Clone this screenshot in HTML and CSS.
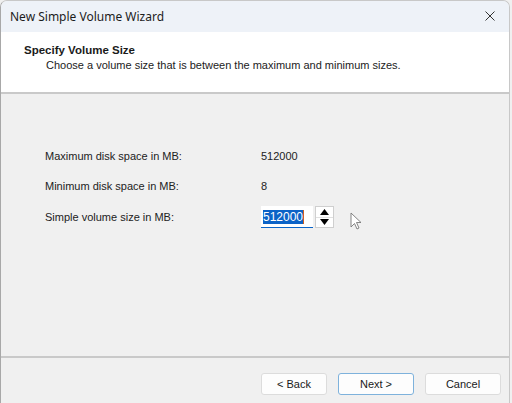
FILE: index.html
```html
<!DOCTYPE html>
<html>
<head>
<meta charset="utf-8">
<link rel="stylesheet" href="styles.css">
</head>
<body>
<div class="window">
  <div class="titlebar">
    <span class="title">New Simple Volume Wizard</span>
    <span class="close">
      <svg width="10" height="10" viewBox="0 0 10 10"><path d="M0.5 0.5L9.5 9.5M9.5 0.5L0.5 9.5" stroke="#333" stroke-width="1"/></svg>
    </span>
  </div>
  <div class="header">
    <div class="h-title">Specify Volume Size</div>
    <div class="h-sub">Choose a volume size that is between the maximum and minimum sizes.</div>
  </div>
  <div class="content">
    <div class="row"><span class="label">Maximum disk space in MB:</span><span class="value">512000</span></div>
    <div class="row"><span class="label">Minimum disk space in MB:</span><span class="value">8</span></div>
    <div class="row row-input">
      <span class="label">Simple volume size in MB:</span>
      <span class="spin">
        <span class="input"><span class="sel">512000</span><span class="caret"></span></span>
        <span class="arrows">
          <span class="arr"><svg width="9" height="6" viewBox="0 0 9 6"><path d="M4.5 0L9 6H0Z" fill="#000"/></svg></span>
          <span class="arr"><svg width="9" height="6" viewBox="0 0 9 6"><path d="M0 0H9L4.5 6Z" fill="#000"/></svg></span>
        </span>
      </span>
      <svg class="cursor" width="12" height="18" viewBox="0 0 12 18"><path d="M1 1V15L4.5 11.5L7 17L9 16L6.5 10.5H11Z" fill="#fff" stroke="#777" stroke-width="0.9" stroke-linejoin="round"/></svg>
    </div>
  </div>
  <div class="footer">
    <button class="btn">&lt; Back</button>
    <button class="btn btn-default">Next &gt;</button>
    <button class="btn btn-cancel">Cancel</button>
  </div>
</div>
</body>
</html>
```

FILE: styles.css
```css
html, body {
  margin: 0;
  padding: 0;
  background: #f0f0f0;
}
.window {
  width: 510px;
  height: 403px;
  box-sizing: border-box;
  border-left: 1px solid #a8a8a8;
  border-top: 1px solid #c8c8c8;
  border-right: 1px solid #c8c8c8;
  border-top-left-radius: 7px;
  border-top-right-radius: 7px;
  overflow: hidden;
  background: #f0f0f0;
  display: flex;
  flex-direction: column;
  font-family: "Liberation Sans", Arial, sans-serif;
  font-size: 11px;
  color: #1a1a1a;
}
.titlebar {
  height: 31px;
  background: #eef2f8;
  display: flex;
  align-items: center;
  justify-content: space-between;
  padding: 0 14px 0 9px;
  flex-shrink: 0;
}
.title {
  font-family: "Noto Sans", "Open Sans", sans-serif;
  font-size: 12px;
  color: #1c1c1c;
  padding-bottom: 1px;
}
.close {
  display: flex;
  padding-bottom: 1px;
}
.header {
  height: 49px;
  background: #fff;
  border-bottom: 2px solid #c9c9c9;
  padding: 11px 0 0 23px;
  box-sizing: content-box;
  flex-shrink: 0;
}
.h-title {
  font-weight: bold;
  font-size: 11.5px;
  line-height: 14px;
}
.h-sub {
  margin-top: 2px;
  padding-left: 22px;
  line-height: 13px;
  color: #222;
}
.content {
  flex: 1;
  border-bottom: 2px solid #c9c9c9;
  padding: 55px 0 0 44px;
  display: flex;
  flex-direction: column;
  gap: 16px;
}
.row {
  display: flex;
  align-items: center;
  height: 14px;
}
.label {
  width: 216px;
  color: #222;
}
.value {
  color: #222;
}
.row-input {
  height: 22px;
  margin-top: -3px;
}
.spin {
  display: flex;
  align-items: stretch;
  height: 22px;
}
.input {
  width: 52px;
  height: 22px;
  box-sizing: border-box;
  background: #fff;
  border-bottom: 1px solid #0a64c8;
  display: flex;
  align-items: center;
  padding-left: 2px;
}
.sel {
  background: #0c63c7;
  color: #fff;
  font-size: 12px;
  line-height: 14px;
}
.caret {
  width: 1px;
  height: 14px;
  background: #d06020;
}
.arrows {
  margin-left: 2px;
  width: 19px;
  display: flex;
  flex-direction: column;
  background: #fff;
  border: 1px solid #cfcfcf;
  box-sizing: border-box;
}
.arr {
  flex: 1;
  display: flex;
  align-items: center;
  justify-content: center;
}
.arr + .arr {
  border-top: 1px solid #e0e0e0;
}
.cursor {
  margin-left: 16px;
  margin-top: 8px;
}
.footer {
  height: 45px;
  flex-shrink: 0;
  display: flex;
  align-items: flex-start;
  padding: 15px 0 0 260px;
  box-sizing: border-box;
}
.btn {
  width: 66px;
  height: 22px;
  background: #fdfdfd;
  border: 1px solid #dcdcdc;
  border-radius: 3px;
  font-family: "Liberation Sans", Arial, sans-serif;
  font-size: 11px;
  color: #1a1a1a;
  padding: 0;
  margin: 0;
}
.btn-default {
  width: 76px;
  margin-left: 11px;
  border: 1px solid #7eb2dc;
}
.btn-cancel {
  width: 76px;
  margin-left: 11px;
}
```
